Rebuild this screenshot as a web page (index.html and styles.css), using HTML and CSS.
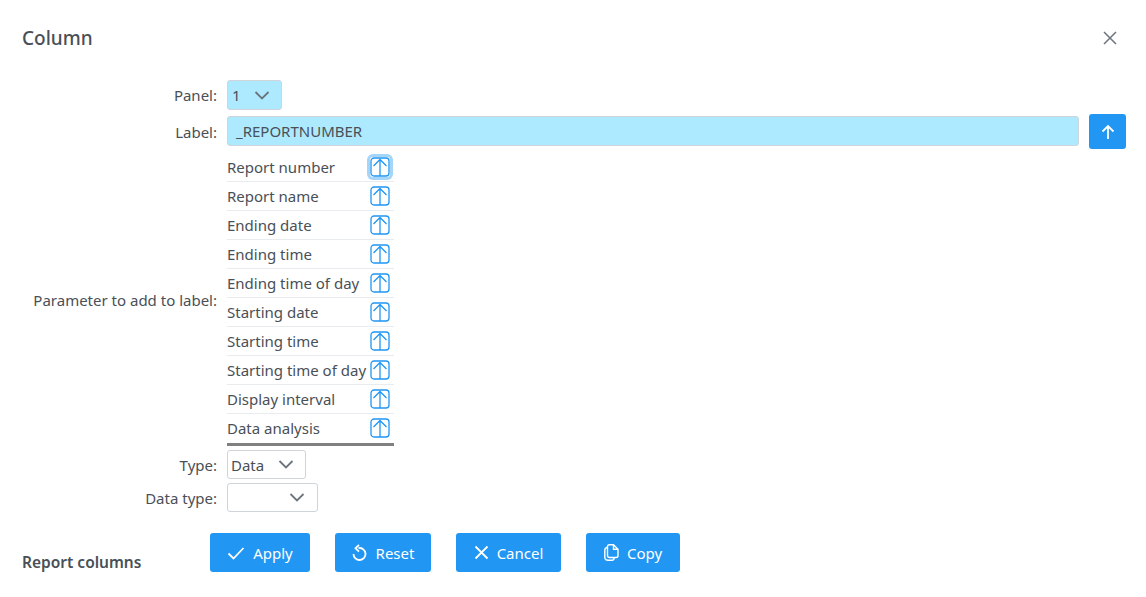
FILE: index.html
```html
<!DOCTYPE html>
<html lang="en">
<head>
<meta charset="utf-8">
<title>Column</title>
<link rel="stylesheet" href="styles.css">
</head>
<body>
<div class="dialog">
  <header class="head">
    <h1 class="title">Column</h1>
    <button class="close" type="button" aria-label="Close">
      <svg width="14" height="14" viewBox="0 0 14 14"><path d="M1 1L13 13M13 1L1 13" class="ic-grey thin"/></svg>
    </button>
  </header>
  <form class="form">
    <label class="lbl">Panel:</label>
    <div class="field">
      <div class="select select-panel tinted"><span>1</span><svg class="chev" width="16" height="9" viewBox="0 0 16 9"><path d="M1.500 1L8 7.500L14.500 1" class="ic-grey"/></svg></div>
    </div>
    <label class="lbl">Label:</label>
    <div class="field label-row">
      <div class="input tinted">_REPORTNUMBER</div>
      <button class="up-btn" type="button" aria-label="Add"><svg width="14" height="16" viewBox="0 0 14 16"><path d="M7 15V2M1.500 7.500L7 2L12.500 7.500" class="ic-white"/></svg></button>
    </div>
    <label class="lbl">Parameter to add to label:</label>
    <div class="field">
      <ul class="params">
        <li class="param"><span>Report number</span><span class="ico focus"><svg width="20" height="20" viewBox="0 0 20 20"><rect x="1" y="1" width="18" height="18" rx="3" class="ic-blue"/><path d="M10 19V2.500M3.500 9L10 2.500L16.500 9" class="ic-blue"/></svg></span></li>
        <li class="param"><span>Report name</span><span class="ico"><svg width="20" height="20" viewBox="0 0 20 20"><rect x="1" y="1" width="18" height="18" rx="3" class="ic-blue"/><path d="M10 19V2.500M3.500 9L10 2.500L16.500 9" class="ic-blue"/></svg></span></li>
        <li class="param"><span>Ending date</span><span class="ico"><svg width="20" height="20" viewBox="0 0 20 20"><rect x="1" y="1" width="18" height="18" rx="3" class="ic-blue"/><path d="M10 19V2.500M3.500 9L10 2.500L16.500 9" class="ic-blue"/></svg></span></li>
        <li class="param"><span>Ending time</span><span class="ico"><svg width="20" height="20" viewBox="0 0 20 20"><rect x="1" y="1" width="18" height="18" rx="3" class="ic-blue"/><path d="M10 19V2.500M3.500 9L10 2.500L16.500 9" class="ic-blue"/></svg></span></li>
        <li class="param"><span>Ending time of day</span><span class="ico"><svg width="20" height="20" viewBox="0 0 20 20"><rect x="1" y="1" width="18" height="18" rx="3" class="ic-blue"/><path d="M10 19V2.500M3.500 9L10 2.500L16.500 9" class="ic-blue"/></svg></span></li>
        <li class="param"><span>Starting date</span><span class="ico"><svg width="20" height="20" viewBox="0 0 20 20"><rect x="1" y="1" width="18" height="18" rx="3" class="ic-blue"/><path d="M10 19V2.500M3.500 9L10 2.500L16.500 9" class="ic-blue"/></svg></span></li>
        <li class="param"><span>Starting time</span><span class="ico"><svg width="20" height="20" viewBox="0 0 20 20"><rect x="1" y="1" width="18" height="18" rx="3" class="ic-blue"/><path d="M10 19V2.500M3.500 9L10 2.500L16.500 9" class="ic-blue"/></svg></span></li>
        <li class="param"><span>Starting time of day</span><span class="ico"><svg width="20" height="20" viewBox="0 0 20 20"><rect x="1" y="1" width="18" height="18" rx="3" class="ic-blue"/><path d="M10 19V2.500M3.500 9L10 2.500L16.500 9" class="ic-blue"/></svg></span></li>
        <li class="param"><span>Display interval</span><span class="ico"><svg width="20" height="20" viewBox="0 0 20 20"><rect x="1" y="1" width="18" height="18" rx="3" class="ic-blue"/><path d="M10 19V2.500M3.500 9L10 2.500L16.500 9" class="ic-blue"/></svg></span></li>
        <li class="param"><span>Data analysis</span><span class="ico"><svg width="20" height="20" viewBox="0 0 20 20"><rect x="1" y="1" width="18" height="18" rx="3" class="ic-blue"/><path d="M10 19V2.500M3.500 9L10 2.500L16.500 9" class="ic-blue"/></svg></span></li>
      </ul>
    </div>
    <label class="lbl">Type:</label>
    <div class="field">
      <div class="select select-type"><span>Data</span><svg class="chev" width="16" height="9" viewBox="0 0 16 9"><path d="M1.500 1L8 7.500L14.500 1" class="ic-grey"/></svg></div>
    </div>
    <label class="lbl">Data type:</label>
    <div class="field">
      <div class="select select-data"><span></span><svg class="chev" width="16" height="9" viewBox="0 0 16 9"><path d="M1.500 1L8 7.500L14.500 1" class="ic-grey"/></svg></div>
    </div>
  </form>
  <footer class="foot">
    <div class="section">Report columns</div>
    <div class="actions">
      <button class="btn btn-apply" type="button"><svg width="18" height="14" viewBox="0 0 18 14"><path d="M1.500 7.500L6.500 12.500L16.500 2" class="ic-white"/></svg>Apply</button>
      <button class="btn btn-reset" type="button"><svg width="16" height="17" viewBox="0 0 16 17"><path d="M6.500 4.100A6 6 0 1 1 1.500 10M7 1L3.500 4.200L7 7.600" class="ic-white"/></svg>Reset</button>
      <button class="btn btn-cancel" type="button"><svg width="15" height="15" viewBox="0 0 15 15"><path d="M1.500 1.500L13.500 13.500M13.500 1.500L1.500 13.500" class="ic-white"/></svg>Cancel</button>
      <button class="btn btn-copy" type="button"><svg width="15" height="17" viewBox="0 0 15 17"><path d="M5.200 .8H9.500L14 5.300V11.500A2 2 0 0 1 12 13.500H5.500A2 2 0 0 1 3.500 11.500V2.500A1.700 1.700 0 0 1 5.200 .8ZM9.500 .8V5.300H14M3.500 3.500A2.800 2.800 0 0 0 .8 6.300V13A3.200 3.200 0 0 0 4 16.200H8A2 2 0 0 0 10 14.200V13.500" class="ic-white thin"/></svg>Copy</button>
    </div>
  </footer>
</div>
</body>
</html>
```
FILE: styles.css
```css
* { box-sizing: border-box; }
html, body { margin: 0; padding: 0; background: #fff; }
body {
  font-family: "Noto Sans", "Open Sans", sans-serif;
  font-size: 15px;
  color: #495057;
  width: 1146px;
  height: 597px;
  overflow: hidden;
}
.dialog { display: flex; flex-direction: column; padding: 24px 20px 0 22px; }
.head { display: flex; justify-content: space-between; align-items: center; height: 28px; }
.title { margin: 0; font-size: 19px; font-weight: 500; line-height: 28px; }
.close { border: 0; background: none; padding: 0; width: 14px; height: 14px; margin-right: 9px; display: flex; }
.ic-grey { fill: none; stroke: #6c757d; stroke-width: 1.8; }
.ic-grey.thin { stroke-width: 1.5; }
.ic-white { fill: none; stroke: #fff; stroke-width: 1.8; }
.ic-white.thin { stroke-width: 1.4; }
.ic-blue { fill: none; stroke: #2196f3; stroke-width: 1.3; }

.form {
  display: grid;
  grid-template-columns: 195px 1fr;
  column-gap: 10px;
  row-gap: 4px;
  align-items: center;
  margin-top: 28px;
}
.lbl { text-align: right; white-space: nowrap; line-height: 20px; }
.field { min-width: 0; }
.tinted { background: #aeeaff; }
.select {
  display: flex;
  align-items: center;
  justify-content: space-between;
  height: 29px;
  border: 1px solid #ced4da;
  border-radius: 3px;
  background-color: #fff;
}
.select.tinted { background: #aeeaff; height: 30px; width: 55px; padding: 0 11px 0 4px; }
.select-type { width: 79px; padding: 0 11px 0 3px; }
.select-data { width: 91px; padding: 0 12px 0 4px; }
.label-row { display: flex; align-items: center; gap: 10px; }
.input {
  flex: 1;
  height: 30px;
  margin-bottom: 1px;
  border: 1px solid #ced4da;
  border-radius: 3px;
  padding: 0 8px;
  line-height: 28px;
}
.up-btn {
  width: 37px;
  height: 35px;
  border: 0;
  border-radius: 3px;
  background: #2196f3;
  padding: 0;
  display: flex;
  align-items: center;
  justify-content: center;
}
.params { list-style: none; margin: 0; padding: 0; width: 167px; border-bottom: 3px solid #808080; }
.param {
  display: flex;
  align-items: center;
  justify-content: space-between;
  height: 29px;
  padding-right: 4px;
  border-bottom: 1px solid #e9ecef;
  white-space: nowrap;
}
.param:last-child { border-bottom-color: transparent; }
.ico { display: flex; width: 20px; height: 20px; border-radius: 3px; }
.ico.focus { box-shadow: 0 0 0 3px #a6d5fa; }
.foot { display: flex; align-items: flex-end; margin-top: 21px; }
.section { width: 188px; font-weight: 600; font-size: 15.500px; line-height: 20px; }
.actions { display: flex; gap: 25px; }
.btn {
  display: flex;
  align-items: center;
  justify-content: center;
  gap: 8px;
  height: 39px;
  border: 0;
  border-radius: 3px;
  background: #2196f3;
  color: #fff;
  font: inherit;
  padding: 0;
}
.btn-apply { width: 100px; }
.btn-reset { width: 96px; }
.btn-cancel { width: 105px; }
.btn-copy { width: 94px; }
```
